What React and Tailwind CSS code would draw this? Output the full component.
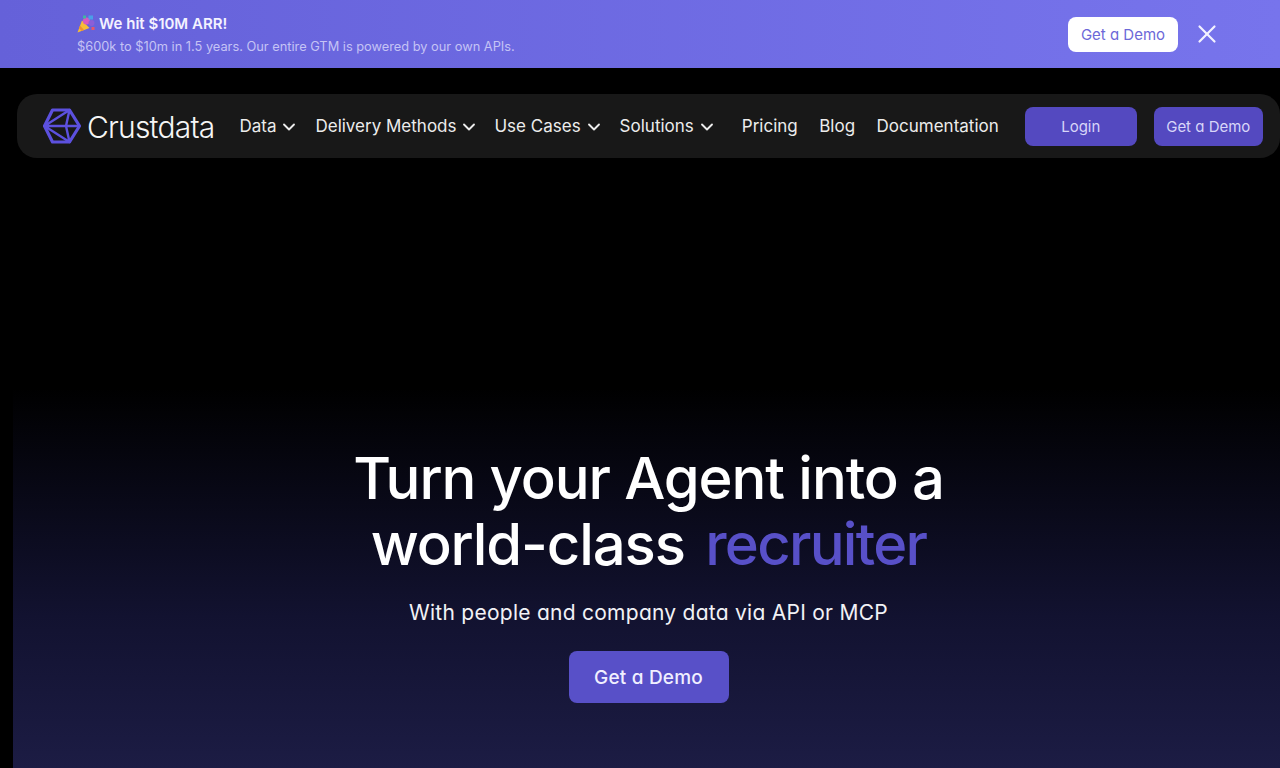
import { ChevronDown, X } from "lucide-react";

const navMenus = [
  { label: "Data", cls: "mr-[16px]" },
  { label: "Delivery Methods", cls: "mr-[15px]" },
  { label: "Use Cases", cls: "mr-[16px]" },
  { label: "Solutions", cls: "mr-[25px]" },
];

const navLinks = ["Pricing", "Blog", "Documentation"];

function Logo() {
  return (
    <svg width="38" height="36" viewBox="0 0 38 36" fill="none" stroke="#5c50de" strokeLinejoin="round">
      <path d="M1.5 18 L9.5 2 H26.5 L36.5 18 L26.5 34 H9.5 Z" strokeWidth="3.2" />
      <path d="M1.5 18 L26.5 2 L23 18 L26.5 34 Z M1.5 18 H36.5" strokeWidth="2.4" />
    </svg>
  );
}

function Popper() {
  return (
    <svg width="18" height="18" viewBox="0 0 18 18" className="shrink-0">
      <path d="M0.5 17.5 L5 5.5 L12.5 13 Z" fill="#f6bd35" />
      <path d="M3 10.5 L7 15 L4.5 16 L2 13 Z" fill="#ef8f30" />
      <circle cx="9.5" cy="6" r="3.6" fill="#d85ac0" />
      <circle cx="14.5" cy="8" r="3" fill="#8a5fd8" />
      <rect x="11.5" y="0.5" width="4.5" height="4" fill="#4a9fe8" />
      <rect x="6" y="0.5" width="3" height="3" fill="#3fb8a0" />
      <rect x="14.5" y="12" width="3" height="3" fill="#e8566a" />
    </svg>
  );
}

export default function App() {
  return (
    <div className="h-[768px] overflow-hidden bg-black font-['Inter',sans-serif] text-white">
      <div className="flex h-[68px] items-center bg-linear-to-r/srgb from-[#6561d9] to-[#7774ec] pl-[77px]">
        <div className="flex-1 pt-[2px]">
          <div className="flex items-center gap-[4px] text-[15px] leading-[20px] font-semibold text-[#f3f2ff]">
            <Popper />
            <span>We hit $10M ARR!</span>
          </div>
          <div className="mt-[4px] text-[12.8px] leading-[18px] text-[#c5c3f5]">
            $600k to $10m in 1.5 years. Our entire GTM is powered by our own APIs.
          </div>
        </div>
        <button className="h-[35px] w-[110px] rounded-lg bg-white pt-[3px] text-[15px] text-[#6c68d8] [font-feature-settings:'cv11']">Get a Demo</button>
        <X className="mr-[58px] ml-[14px] text-[#f3f2ff]" size={30} strokeWidth={1.75} />
      </div>

      <nav className="mt-[26px] ml-[17px] flex h-[64px] items-center rounded-[20px] bg-[#181818] pl-[26px]">
        <Logo />
        <span className="mr-[25px] ml-[6px] pt-[2px] text-[30px] leading-none font-light tracking-[-0.8px] text-[#f5f5f5]">Crustdata</span>
        {navMenus.map((m) => (
          <div key={m.label} className={`flex items-center gap-[3px] pt-[1px] text-[17px] text-[#ececec] ${m.cls}`}>
            <span>{m.label}</span>
            <ChevronDown size={20} strokeWidth={2.25} />
          </div>
        ))}
        <div className="flex items-center gap-[21.5px] pt-[1px] text-[17px] text-[#ececec]">
          {navLinks.map((l) => (
            <span key={l}>{l}</span>
          ))}
        </div>
        <button className="ml-[26px] h-[39px] w-[112px] rounded-lg bg-[#5449c0] pt-[3px] text-[15px] text-[#d8d6f8] [font-feature-settings:'cv11']">Login</button>
        <button className="ml-[17px] h-[39px] w-[109px] rounded-lg bg-[#5449c0] pt-[3px] text-[15px] text-[#d8d6f8] [font-feature-settings:'cv11']">Get a Demo</button>
      </nav>

      <section className="mt-[230px] ml-[13px] flex h-[380px] flex-col items-center bg-linear-to-b/srgb from-black via-[#121230] via-60% to-[#1c1c44] pt-[57px] pl-[4px]">
        <h1 className="text-center text-[58px] leading-[66px] font-medium tracking-[-1.1px]">
          <span className="block">Turn your Agent into a</span>
          <span className="block">
            world-class <span className="ml-[6px] tracking-[-1.7px] text-[#5850c8]">recruiter</span>
          </span>
        </h1>
        <p className="mt-[21px] text-[21px] leading-[30px] tracking-[0.26px] text-[#f2f2f6] [font-feature-settings:'cv11']">With people and company data via API or MCP</p>
        <button className="mt-[23px] h-[52px] w-[160px] rounded-lg bg-[#5850c8] pt-[3px] text-[19px] font-medium tracking-[0.2px] text-[#f0efff] [font-feature-settings:'cv11']">Get a Demo</button>
      </section>
    </div>
  );
}
